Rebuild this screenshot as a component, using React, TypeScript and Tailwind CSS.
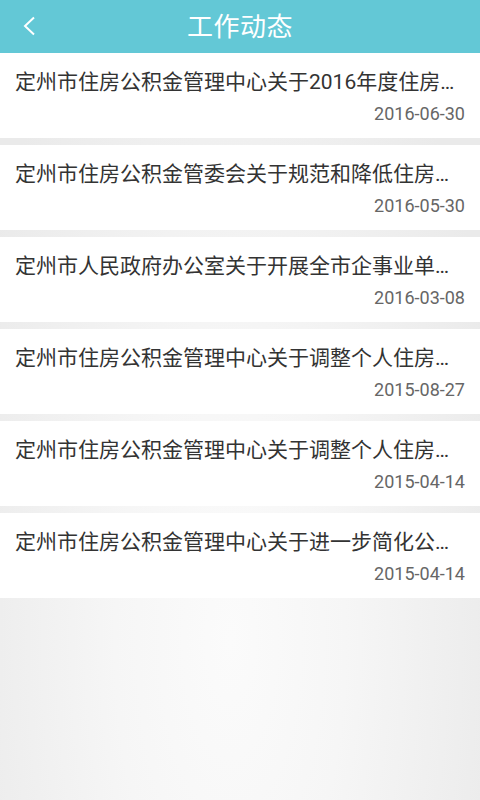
const news = [
  { title: "定州市住房公积金管理中心关于2016年度住房…", date: "2016-06-30" },
  { title: "定州市住房公积金管委会关于规范和降低住房…", date: "2016-05-30" },
  { title: "定州市人民政府办公室关于开展全市企事业单…", date: "2016-03-08" },
  { title: "定州市住房公积金管理中心关于调整个人住房…", date: "2015-08-27" },
  { title: "定州市住房公积金管理中心关于调整个人住房…", date: "2015-04-14" },
  { title: "定州市住房公积金管理中心关于进一步简化公…", date: "2015-04-14" },
];

const font = { fontFamily: '"Roboto", "Noto Sans CJK SC", sans-serif' };

export default function App() {
  return (
    <div
      className="w-[480px] h-[800px] flex flex-col bg-[radial-gradient(ellipse_60%_90%_at_48%_80%,#fbfbfb_0%,#f6f6f6_40%,#eaeaea_100%)]"
      style={font}
    >
      <header className="h-[53px] shrink-0 bg-[#63c8d6] relative flex items-center justify-center">
        <button className="absolute left-[14px] top-[10px] w-[30px] h-[32px]">
          <svg width="30" height="32" viewBox="0 0 30 32" fill="none">
            <path d="M20 7.5 L11 16 L20 24.5" stroke="white" strokeWidth="2" />
          </svg>
        </button>
        <h1 className="text-[26px] leading-[32px] text-white tracking-[0.5px]">工作动态</h1>
      </header>

      <ul className="flex flex-col gap-[7px]">
        {news.map((item, i) => (
          <li key={i} className="h-[85px] bg-white px-[15px] pt-[15px]">
            <p className="whitespace-nowrap text-[21px] leading-[28px] text-[#333333]">{item.title}</p>
            <p className="mt-[7px] text-right text-[18px] leading-[22px] text-[#666666]">{item.date}</p>
          </li>
        ))}
      </ul>
    </div>
  );
}
